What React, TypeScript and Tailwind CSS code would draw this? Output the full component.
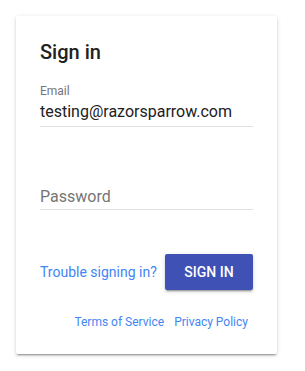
import React from 'react';

export default function App() {
  return (
    <div className="min-h-screen bg-white p-4" style={{ fontFamily: 'Roboto, "Noto Sans", sans-serif' }}>
      <div className="w-[261px] rounded-[2px] bg-white px-6 pt-6 pb-6 shadow-[0_2px_2px_0_rgba(0,0,0,0.14),0_3px_1px_-2px_rgba(0,0,0,0.2),0_1px_5px_0_rgba(0,0,0,0.12)]">
        <h1 className="text-[20px] leading-[24px] font-medium text-[#212121]">Sign in</h1>

        <div className="mt-[19px] border-b border-[#e0e0e0] pb-[4px]">
          <label className="block text-[12px] leading-[16px] text-[#757575]">Email</label>
          <div className="mt-[3px] text-[16px] leading-[20px] text-[#212121]">testing@razorsparrow.com</div>
        </div>

        <div className="mt-[60px] border-b border-[#e0e0e0] pb-[2px]">
          <div className="text-[16px] leading-[20px] text-[#757575]">Password</div>
        </div>

        <div className="mt-[44px] flex items-center justify-between">
          <a className="text-[14px] leading-[20px] text-[#4285f4]">Trouble signing in?</a>
          <button className="flex h-[36px] w-[88px] items-center justify-center rounded-[2px] bg-[#3f51b5] text-[14px] font-medium uppercase text-white shadow-[0_2px_2px_0_rgba(0,0,0,0.14),0_3px_1px_-2px_rgba(0,0,0,0.2),0_1px_5px_0_rgba(0,0,0,0.12)]">
            Sign in
          </button>
        </div>

        <div className="mt-6 flex justify-end gap-[10px] pr-[5px] text-[12px] leading-[16px] text-[#4285f4]">
          <a>Terms of Service</a>
          <a>Privacy Policy</a>
        </div>
      </div>
    </div>
  );
}
